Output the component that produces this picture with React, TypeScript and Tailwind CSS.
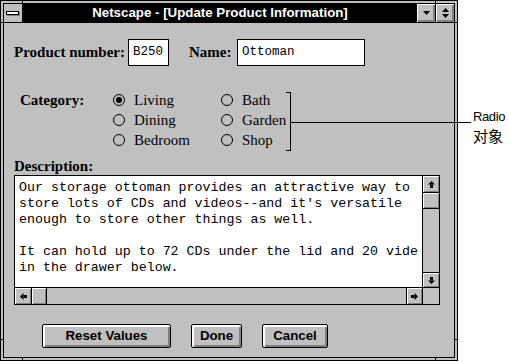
import React from "react";

const serif = { fontFamily: '"Liberation Serif", "Times New Roman", serif' };
const sans = { fontFamily: '"Liberation Sans", Arial, sans-serif' };
const mono = { fontFamily: '"Liberation Mono", "Courier New", monospace' };

function Arrow({ dir }: { dir: "up" | "down" | "left" | "right" }) {
  const rot = { up: 0, right: 90, down: 180, left: 270 }[dir];
  return (
    <svg width="7" height="7" viewBox="0 0 7 7" style={{ transform: `rotate(${rot}deg)` }}>
      <path d="M3.5 0 L7 3.5 L0 3.5 Z" fill="#000" />
      <rect x="2" y="3.5" width="3" height="3.5" fill="#000" />
    </svg>
  );
}

const bevel = "bg-[#c0c0c0] shadow-[inset_1px_1px_0_#fff,inset_-1px_-1px_0_#808080]";

function Radio({ label, checked }: { label: string; checked?: boolean }) {
  return (
    <div className="h-[20px] flex items-center">
      <div className="w-[12px] h-[12px] rounded-full border border-black flex items-center justify-center">
        {checked && <div className="w-[6px] h-[6px] rounded-full bg-black" />}
      </div>
      <span className="ml-[9px] text-[15px] leading-[20px] text-black" style={serif}>
        {label}
      </span>
    </div>
  );
}

function Btn({ label, w }: { label: string; w: string }) {
  return (
    <div
      className={`${w} h-[24px] border border-black rounded-[2px] bg-[#c0c0c0] shadow-[inset_2px_2px_0_#fff,inset_-2px_-2px_0_#808080] flex items-center justify-center text-[13.3px] font-bold text-black`}
      style={sans}
    >
      {label}
    </div>
  );
}

const lines = [
  "Our storage ottoman provides an attractive way to",
  "store lots of CDs and videos--and it's versatile",
  "enough to store other things as well.",
  "",
  "It can hold up to 72 CDs under the lid and 20 vide",
  "in the drawer below.",
];

export default function App() {
  return (
    <div className="w-[509px] h-[362px] bg-white relative overflow-hidden">
      {/* Window */}
      <div className="relative w-[458px] h-[361px] border border-black bg-[#c0c0c0] p-[2px]">
        {/* frame corner ticks */}
        <div className="absolute left-[21px] top-0 w-px h-[2px] bg-black" />
        <div className="absolute left-[434px] top-0 w-px h-[2px] bg-black" />
        <div className="absolute left-[21px] bottom-0 w-px h-[2px] bg-black" />
        <div className="absolute left-[434px] bottom-0 w-px h-[2px] bg-black" />
        <div className="absolute top-[21px] left-0 h-px w-[2px] bg-black" />
        <div className="absolute top-[338px] left-0 h-px w-[2px] bg-black" />
        <div className="absolute top-[21px] right-0 h-px w-[2px] bg-black" />
        <div className="absolute top-[338px] right-0 h-px w-[2px] bg-black" />

        <div className="h-full border border-black flex flex-col">
          {/* Title bar */}
          <div className="h-[19px] flex border-b border-black bg-black shrink-0">
            <div className="w-[19px] h-[18px] bg-[#c0c0c0] border-r border-black flex items-center justify-center">
              <div className="w-[13px] h-[4px] border border-black bg-white shadow-[1px_1px_0_#808080] -ml-[2px]" />
            </div>
            <div
              className="flex-1 text-white font-bold text-[13.3px] leading-[18px] text-center whitespace-nowrap"
              style={sans}
            >
              Netscape - [Update Product Information]
            </div>
            <div className="w-[18px] h-[18px] bg-[#c0c0c0] shadow-[inset_1px_1px_0_#fff,inset_-2px_-2px_0_#808080] flex items-center justify-center">
              <svg width="7" height="4" viewBox="0 0 7 4">
                <path d="M0 0 H7 L3.5 4 Z" fill="#000" />
              </svg>
            </div>
            <div className="w-px" />
            <div className="w-[18px] h-[18px] bg-[#c0c0c0] shadow-[inset_1px_1px_0_#fff,inset_-2px_-2px_0_#808080] flex flex-col items-center justify-center gap-[2px]">
              <svg width="7" height="4" viewBox="0 0 7 4">
                <path d="M0 4 H7 L3.5 0 Z" fill="#000" />
              </svg>
              <svg width="7" height="4" viewBox="0 0 7 4">
                <path d="M0 0 H7 L3.5 4 Z" fill="#000" />
              </svg>
            </div>
          </div>

          {/* Body */}
          <div className="flex-1 pl-[10px] pt-[16px] flex flex-col">
            {/* Row 1 */}
            <div className="flex items-center h-[27px]">
              <div className="w-[114px] text-[15px] font-bold text-black whitespace-nowrap" style={serif}>
                Product number:
              </div>
              <div className="w-[41px] h-[27px] border border-black bg-white pl-[4px] flex items-center text-[12.5px] text-black" style={mono}>
                B250
              </div>
              <div className="ml-[20px] w-[48px] text-[15px] font-bold text-black" style={serif}>
                Name:
              </div>
              <div className="w-[128px] h-[27px] border border-black bg-white pl-[4px] flex items-center text-[12.5px] text-black" style={mono}>
                Ottoman
              </div>
            </div>

            {/* Category */}
            <div className="flex mt-[24px]">
              <div className="w-[99px] pl-[6px] h-[20px] leading-[20px] text-[15px] font-bold text-black" style={serif}>
                Category:
              </div>
              <div className="w-[108px] flex flex-col">
                <Radio label="Living" checked />
                <Radio label="Dining" />
                <Radio label="Bedroom" />
              </div>
              <div className="flex flex-col">
                <Radio label="Bath" />
                <Radio label="Garden" />
                <Radio label="Shop" />
              </div>
            </div>

            {/* Description */}
            <div className="mt-[7px] h-[18px] flex items-center text-[15px] font-bold text-black" style={serif}>
              Description:
            </div>
            <div className="w-[426px] h-[130px] border border-black bg-white flex flex-col">
              <div className="flex-1 flex min-h-0">
                <div
                  className="flex-1 overflow-hidden pt-[4px] pl-[4px] text-[13.3px] leading-[16px] text-black whitespace-pre"
                  style={mono}
                >
                  {lines.map((l, i) => (
                    <div key={i} className="h-[16px]">
                      {l}
                    </div>
                  ))}
                </div>
                <div className="w-[17px] border-l border-black bg-[#c0c0c0] flex flex-col">
                  <div className="h-[17px] border-b border-black">
                    <div className={`w-full h-full ${bevel} flex items-center justify-center`}>
                      <Arrow dir="up" />
                    </div>
                  </div>
                  <div className="h-[16px] border-b border-black">
                    <div className={`w-full h-full ${bevel}`} />
                  </div>
                  <div className="flex-1" />
                  <div className="h-[15px] border-t border-black">
                    <div className={`w-full h-full ${bevel} flex items-center justify-center`}>
                      <Arrow dir="down" />
                    </div>
                  </div>
                </div>
              </div>
              <div className="h-[17px] border-t border-black flex bg-[#c0c0c0]">
                <div className="w-[17px] border-r border-black">
                  <div className={`w-full h-full ${bevel} flex items-center justify-center`}>
                    <Arrow dir="left" />
                  </div>
                </div>
                <div className="w-[15px] border-r border-black">
                  <div className={`w-full h-full ${bevel}`} />
                </div>
                <div className="flex-1" />
                <div className="w-[16px] border-l border-black">
                  <div className={`w-full h-full ${bevel} flex items-center justify-center`}>
                    <Arrow dir="right" />
                  </div>
                </div>
                <div className="w-[17px] border-l border-black" />
              </div>
            </div>

            {/* Buttons */}
            <div className="flex mt-[19px] ml-[28px] gap-[20px]">
              <Btn label="Reset Values" w="w-[129px]" />
              <Btn label="Done" w="w-[51px]" />
              <Btn label="Cancel" w="w-[66px]" />
            </div>
          </div>
        </div>
      </div>

      {/* Callout annotation */}
      <div className="absolute left-[290px] top-[92px] w-px h-[59px] bg-black" />
      <div className="absolute left-[286px] top-[92px] w-[5px] h-px bg-black" />
      <div className="absolute left-[286px] top-[150px] w-[5px] h-px bg-black" />
      <div className="absolute left-[290px] top-[122px] w-[181px] h-px bg-black" />
      <div
        className="absolute left-[473px] top-[109px] text-[13px] leading-[16px] tracking-[-0.4px] text-black"
        style={sans}
      >
        Radio
      </div>
      <div
        className="absolute left-[473px] top-[127px] text-[15px] leading-[18px] text-black"
        style={{ fontFamily: '"Noto Sans CJK SC", "Noto Sans", sans-serif' }}
      >
        对象
      </div>
    </div>
  );
}
